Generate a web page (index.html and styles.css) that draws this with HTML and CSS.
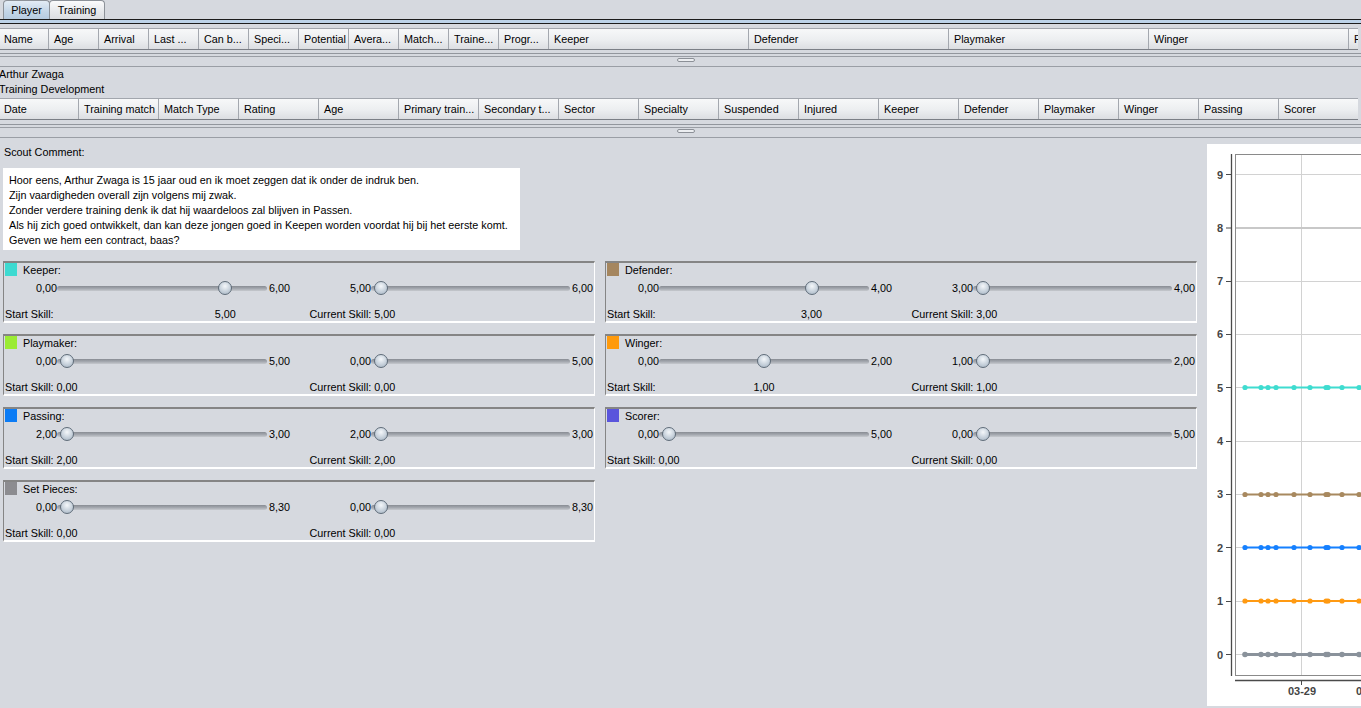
FILE: index.html
```html
<!DOCTYPE html>
<html>
<head>
<meta charset="utf-8">
<title>Player Training</title>
<link rel="stylesheet" href="styles.css">
</head>
<body>
<div class="tabbar">
  <div class="tab sel">Player</div>
  <div class="tab t2tab">Training</div>
</div>
<div class="tabline"></div>

<div class="thead t1">
  <div class="th">Name</div>
  <div class="th">Age</div>
  <div class="th">Arrival</div>
  <div class="th">Last ...</div>
  <div class="th">Can b...</div>
  <div class="th">Speci...</div>
  <div class="th">Potential</div>
  <div class="th">Avera...</div>
  <div class="th">Match...</div>
  <div class="th">Traine...</div>
  <div class="th">Progr...</div>
  <div class="th wide">Keeper</div>
  <div class="th wide">Defender</div>
  <div class="th wide">Playmaker</div>
  <div class="th wide">Winger</div>
  <div class="th wide">Passing</div>
</div>
<div class="hscroll"></div>
<div class="splitter"><span class="grip"></span></div>

<div class="plabel">Arthur Zwaga</div>
<div class="plabel">Training Development</div>

<div class="thead t2">
  <div class="th">Date</div>
  <div class="th">Training match</div>
  <div class="th">Match Type</div>
  <div class="th">Rating</div>
  <div class="th">Age</div>
  <div class="th">Primary train...</div>
  <div class="th">Secondary t...</div>
  <div class="th">Sector</div>
  <div class="th">Specialty</div>
  <div class="th">Suspended</div>
  <div class="th">Injured</div>
  <div class="th">Keeper</div>
  <div class="th">Defender</div>
  <div class="th">Playmaker</div>
  <div class="th">Winger</div>
  <div class="th">Passing</div>
  <div class="th">Scorer</div>
</div>
<div class="hscroll h2"></div>
<div class="splitter"><span class="grip"></span></div>

<div class="lower">
  <div class="leftcol">
    <div class="sc-label">Scout Comment:</div>
    <div class="comment">
      <div>Hoor eens, Arthur Zwaga is 15 jaar oud en ik moet zeggen dat ik onder de indruk ben.</div>
      <div>Zijn vaardigheden overall zijn volgens mij zwak.</div>
      <div>Zonder verdere training denk ik dat hij waardeloos zal blijven in Passen.</div>
      <div>Als hij zich goed ontwikkelt, dan kan deze jongen goed in Keepen worden voordat hij bij het eerste komt.</div>
      <div>Geven we hem een contract, baas?</div>
    </div>

    <div class="skills">
      <!-- Keeper -->
      <div class="skill">
        <div class="sk-head"><span class="sw c-keeper"></span>Keeper:</div>
        <div class="sk-row">
          <div class="half h1"><span class="mn">0,00</span><div class="track"><span class="thumb" style="--f:0.8333"></span></div><span class="mx">6,00</span></div>
          <div class="half h2"><span class="mn">5,00</span><div class="track"><span class="thumb" style="--f:0"></span></div><span class="mx">6,00</span></div>
        </div>
        <div class="sk-foot">
          <div class="half h1 foot"><span class="lbl">Start Skill:</span><span class="under" style="--f:0.8333">5,00</span></div>
          <div class="half h2 foot2">Current Skill: 5,00</div>
        </div>
      </div>
      <!-- Defender -->
      <div class="skill">
        <div class="sk-head"><span class="sw c-defender"></span>Defender:</div>
        <div class="sk-row">
          <div class="half h1"><span class="mn">0,00</span><div class="track"><span class="thumb" style="--f:0.75"></span></div><span class="mx">4,00</span></div>
          <div class="half h2"><span class="mn">3,00</span><div class="track"><span class="thumb" style="--f:0"></span></div><span class="mx">4,00</span></div>
        </div>
        <div class="sk-foot">
          <div class="half h1 foot"><span class="lbl">Start Skill:</span><span class="under" style="--f:0.75">3,00</span></div>
          <div class="half h2 foot2">Current Skill: 3,00</div>
        </div>
      </div>
      <!-- Playmaker -->
      <div class="skill">
        <div class="sk-head"><span class="sw c-playmaker"></span>Playmaker:</div>
        <div class="sk-row">
          <div class="half h1"><span class="mn">0,00</span><div class="track"><span class="thumb" style="--f:0"></span></div><span class="mx">5,00</span></div>
          <div class="half h2"><span class="mn">0,00</span><div class="track"><span class="thumb" style="--f:0"></span></div><span class="mx">5,00</span></div>
        </div>
        <div class="sk-foot">
          <div class="half h1 foot"><span class="lbl">Start Skill: 0,00</span></div>
          <div class="half h2 foot2">Current Skill: 0,00</div>
        </div>
      </div>
      <!-- Winger -->
      <div class="skill">
        <div class="sk-head"><span class="sw c-winger"></span>Winger:</div>
        <div class="sk-row">
          <div class="half h1"><span class="mn">0,00</span><div class="track"><span class="thumb" style="--f:0.5"></span></div><span class="mx">2,00</span></div>
          <div class="half h2"><span class="mn">1,00</span><div class="track"><span class="thumb" style="--f:0"></span></div><span class="mx">2,00</span></div>
        </div>
        <div class="sk-foot">
          <div class="half h1 foot"><span class="lbl">Start Skill:</span><span class="under" style="--f:0.5">1,00</span></div>
          <div class="half h2 foot2">Current Skill: 1,00</div>
        </div>
      </div>
      <!-- Passing -->
      <div class="skill">
        <div class="sk-head"><span class="sw c-passing"></span>Passing:</div>
        <div class="sk-row">
          <div class="half h1"><span class="mn">2,00</span><div class="track"><span class="thumb" style="--f:0"></span></div><span class="mx">3,00</span></div>
          <div class="half h2"><span class="mn">2,00</span><div class="track"><span class="thumb" style="--f:0"></span></div><span class="mx">3,00</span></div>
        </div>
        <div class="sk-foot">
          <div class="half h1 foot"><span class="lbl">Start Skill: 2,00</span></div>
          <div class="half h2 foot2">Current Skill: 2,00</div>
        </div>
      </div>
      <!-- Scorer -->
      <div class="skill">
        <div class="sk-head"><span class="sw c-scorer"></span>Scorer:</div>
        <div class="sk-row">
          <div class="half h1"><span class="mn">0,00</span><div class="track"><span class="thumb" style="--f:0"></span></div><span class="mx">5,00</span></div>
          <div class="half h2"><span class="mn">0,00</span><div class="track"><span class="thumb" style="--f:0"></span></div><span class="mx">5,00</span></div>
        </div>
        <div class="sk-foot">
          <div class="half h1 foot"><span class="lbl">Start Skill: 0,00</span></div>
          <div class="half h2 foot2">Current Skill: 0,00</div>
        </div>
      </div>
      <!-- Set Pieces -->
      <div class="skill">
        <div class="sk-head"><span class="sw c-setpieces"></span>Set Pieces:</div>
        <div class="sk-row">
          <div class="half h1"><span class="mn">0,00</span><div class="track"><span class="thumb" style="--f:0"></span></div><span class="mx">8,30</span></div>
          <div class="half h2"><span class="mn">0,00</span><div class="track"><span class="thumb" style="--f:0"></span></div><span class="mx">8,30</span></div>
        </div>
        <div class="sk-foot">
          <div class="half h1 foot"><span class="lbl">Start Skill: 0,00</span></div>
          <div class="half h2 foot2">Current Skill: 0,00</div>
        </div>
      </div>
    </div>
  </div>

  <div class="chart">
    <svg class="chart-svg" width="200" height="562" viewBox="0 0 200 562">
      <rect x="28.5" y="10.5" width="200" height="521" fill="#fff" stroke="#8a8a8a" stroke-width="1"/>
      <g stroke="#d2d2d2" stroke-width="1">
        <line x1="29" x2="200" y1="510.5" y2="510.5"/>
        <line x1="29" x2="200" y1="457.5" y2="457.5"/>
        <line x1="29" x2="200" y1="403.5" y2="403.5"/>
        <line x1="29" x2="200" y1="350.5" y2="350.5"/>
        <line x1="29" x2="200" y1="297.5" y2="297.5"/>
        <line x1="29" x2="200" y1="243.5" y2="243.5"/>
        <line x1="29" x2="200" y1="190.5" y2="190.5"/>
        <line x1="29" x2="200" y1="137.5" y2="137.5"/>
        <line x1="29" x2="200" y1="30.5" y2="30.5"/>
        <line x1="94.5" x2="94.5" y1="11" y2="531"/>
      </g>
      <line x1="29" x2="200" y1="84" y2="84" stroke="#c8c8c8" stroke-width="2"/>
      <line x1="24.5" x2="24.5" y1="10" y2="532" stroke="#4a4a4a" stroke-width="1.3"/>
      <g stroke="#4a4a4a" stroke-width="1">
        <line x1="19" x2="24.5" y1="510.5" y2="510.5"/>
        <line x1="19" x2="24.5" y1="457.5" y2="457.5"/>
        <line x1="19" x2="24.5" y1="403.5" y2="403.5"/>
        <line x1="19" x2="24.5" y1="350.5" y2="350.5"/>
        <line x1="19" x2="24.5" y1="297.5" y2="297.5"/>
        <line x1="19" x2="24.5" y1="243.5" y2="243.5"/>
        <line x1="19" x2="24.5" y1="190.5" y2="190.5"/>
        <line x1="19" x2="24.5" y1="137.5" y2="137.5"/>
        <line x1="19" x2="24.5" y1="84" y2="84"/>
        <line x1="19" x2="24.5" y1="30.5" y2="30.5"/>
      </g>
      <g class="axlbl" text-anchor="end">
        <text x="16" y="514.5">0</text>
        <text x="16" y="461">1</text>
        <text x="16" y="407.5">2</text>
        <text x="16" y="354">3</text>
        <text x="16" y="301">4</text>
        <text x="16" y="247.5">5</text>
        <text x="16" y="194">6</text>
        <text x="16" y="141">7</text>
        <text x="16" y="88">8</text>
        <text x="16" y="34.5">9</text>
      </g>
      <line x1="28" x2="200" y1="536.5" y2="536.5" stroke="#4a4a4a" stroke-width="1.3"/>
      <line x1="94.5" x2="94.5" y1="536.5" y2="541" stroke="#4a4a4a" stroke-width="1"/>
      <g class="axlbl" text-anchor="middle">
        <text x="95" y="551">03-29</text>
        <text x="163" y="551">04-05</text>
      </g>
      <g stroke-width="2" fill="none">
        <polyline stroke="#3fdcd0" points="38,243.5 200,243.5"/>
        <polyline stroke="#a8895f" points="38,350.5 200,350.5"/>
        <polyline stroke="#1580ff" points="38,403.5 200,403.5"/>
        <polyline stroke="#ff9a12" points="38,457 200,457"/>
        <polyline stroke="#8a929b" stroke-width="3" points="38,510.5 200,510.5"/>
      </g>
      <g fill="#3fdcd0">
        <circle cx="38" cy="243.5" r="2.6"/><circle cx="54" cy="243.5" r="2.6"/><circle cx="61" cy="243.5" r="2.6"/><circle cx="69" cy="243.5" r="2.6"/><circle cx="87" cy="243.5" r="2.6"/><circle cx="103" cy="243.5" r="2.6"/><circle cx="119" cy="243.5" r="2.6"/><circle cx="121" cy="243.5" r="2.6"/><circle cx="135" cy="243.5" r="2.6"/><circle cx="152" cy="243.5" r="2.6"/>
      </g>
      <g fill="#a8895f">
        <circle cx="38" cy="350.5" r="2.6"/><circle cx="54" cy="350.5" r="2.6"/><circle cx="61" cy="350.5" r="2.6"/><circle cx="69" cy="350.5" r="2.6"/><circle cx="87" cy="350.5" r="2.6"/><circle cx="103" cy="350.5" r="2.6"/><circle cx="119" cy="350.5" r="2.6"/><circle cx="121" cy="350.5" r="2.6"/><circle cx="135" cy="350.5" r="2.6"/><circle cx="152" cy="350.5" r="2.6"/>
      </g>
      <g fill="#1580ff">
        <circle cx="38" cy="403.5" r="2.6"/><circle cx="54" cy="403.5" r="2.6"/><circle cx="61" cy="403.5" r="2.6"/><circle cx="69" cy="403.5" r="2.6"/><circle cx="87" cy="403.5" r="2.6"/><circle cx="103" cy="403.5" r="2.6"/><circle cx="119" cy="403.5" r="2.6"/><circle cx="121" cy="403.5" r="2.6"/><circle cx="135" cy="403.5" r="2.6"/><circle cx="152" cy="403.5" r="2.6"/>
      </g>
      <g fill="#ff9a12">
        <circle cx="38" cy="457" r="2.6"/><circle cx="54" cy="457" r="2.6"/><circle cx="61" cy="457" r="2.6"/><circle cx="69" cy="457" r="2.6"/><circle cx="87" cy="457" r="2.6"/><circle cx="103" cy="457" r="2.6"/><circle cx="119" cy="457" r="2.6"/><circle cx="121" cy="457" r="2.6"/><circle cx="135" cy="457" r="2.6"/><circle cx="152" cy="457" r="2.6"/>
      </g>
      <g fill="#8a929b">
        <circle cx="38" cy="510.5" r="2.8"/><circle cx="54" cy="510.5" r="2.8"/><circle cx="61" cy="510.5" r="2.8"/><circle cx="69" cy="510.5" r="2.8"/><circle cx="87" cy="510.5" r="2.8"/><circle cx="103" cy="510.5" r="2.8"/><circle cx="119" cy="510.5" r="2.8"/><circle cx="121" cy="510.5" r="2.8"/><circle cx="135" cy="510.5" r="2.8"/><circle cx="152" cy="510.5" r="2.8"/>
      </g>
    </svg>
  </div>
</div>
</body>
</html>
```

FILE: styles.css
```css
html, body {
  margin: 0;
  padding: 0;
}
body {
  background: #d6d9df;
  font-family: "Liberation Sans", Arial, sans-serif;
  font-size: 10.8px;
  color: #000;
  width: 1361px;
  height: 708px;
  overflow: hidden;
}

/* tabs */
.tabbar {
  display: flex;
  height: 19px;
  padding-left: 3px;
}
.tab {
  box-sizing: border-box;
  height: 19px;
  border: 1px solid #8d9299;
  border-bottom: none;
  border-radius: 4px 4px 0 0;
  line-height: 18px;
  text-align: center;
  background: linear-gradient(#fbfbfc, #e6e8eb 60%, #dcdee2);
}
.tab.sel {
  width: 47px;
  background: linear-gradient(#e3ecf5, #c3d5e7 60%, #b6cbe0);
}
.tab.t2tab {
  width: 56px;
  margin-left: -1px;
}
.tabline {
  height: 3px;
  border-top: 1px solid #1c1c1c;
  border-bottom: 1px solid #1c1c1c;
  background: #bcd2e8;
}

/* table headers */
.thead {
  display: flex;
  height: 20px;
  width: 1359px;
  margin-left: -1px;
  border-top: 1px solid #a2a6ad;
  border-bottom: 1px solid #7b7f86;
  overflow: hidden;
}
.t1 { margin-top: 4px; }
.t2 { margin-top: 1px; }
.th {
  flex: 0 0 auto;
  box-sizing: border-box;
  width: 50px;
  height: 20px;
  border-right: 1px solid #a4a8af;
  padding-left: 5px;
  line-height: 20px;
  white-space: nowrap;
  overflow: hidden;
  background: linear-gradient(#f7f8f9, #eceef0 55%, #dcdee2);
}
.t1 .th.wide { width: 200px; }
.t2 .th { width: 80px; }

.hscroll {
  height: 3px;
  border-bottom: 1px solid #92969d;
}
.hscroll.h2 { height: 4px; }

.splitter {
  margin-top: 2px;
  height: 8px;
  border-top: 1px solid #9a9ea5;
  border-bottom: 1px solid #9a9ea5;
  padding-top: 1px;
}
.grip {
  display: block;
  box-sizing: border-box;
  width: 18px;
  height: 4px;
  margin-left: 677px;
  border: 1px solid #8c9097;
  border-radius: 2px;
  background: #eceef1;
}

.plabel {
  line-height: 15px;
  height: 15px;
  margin-left: -1px;
  white-space: nowrap;
}

/* lower area */
.lower {
  display: flex;
  height: 571px;
}
.leftcol {
  flex: 0 0 1207px;
}
.sc-label {
  padding-top: 7px;
  padding-left: 4px;
  line-height: 14px;
}
.comment {
  box-sizing: border-box;
  margin: 9px 0 0 3px;
  width: 517px;
  height: 82px;
  padding: 5px 0 0 6px;
  background: #fff;
  line-height: 15px;
  white-space: nowrap;
}

.skills {
  margin: 11px 0 0 3px;
  display: grid;
  grid-template-columns: 592px 592px;
  column-gap: 10px;
  row-gap: 11px;
}
.skill {
  box-sizing: border-box;
  height: 62px;
  border-top: 2px solid #858585;
  border-left: 1px solid #858585;
  border-right: 1px solid #ffffff;
  border-bottom: 2px solid #ffffff;
  padding-left: 1px;
}
.sk-head {
  display: flex;
  align-items: flex-start;
  height: 15px;
  line-height: 15px;
}
.sw {
  display: block;
  width: 12px;
  height: 13px;
  margin-right: 6px;
}
.c-keeper { background: #3ddad1; }
.c-defender { background: #a5865f; }
.c-playmaker { background: #9beb34; }
.c-winger { background: #ff9a0c; }
.c-passing { background: #0c7cf5; }
.c-scorer { background: #5a55dc; }
.c-setpieces { background: #8c8c90; }

.sk-row {
  display: flex;
  height: 20px;
}
.half {
  display: flex;
  align-items: center;
  box-sizing: border-box;
}
.half.h1 {
  width: 305px;
  padding-left: 27px;
}
.half.h2 {
  width: 285px;
  padding-left: 37px;
}
.mn {
  width: 25px;
  text-align: right;
  flex: 0 0 25px;
}
.mx {
  margin-left: 2px;
  flex: 0 0 22px;
}
.track {
  position: relative;
  height: 5px;
  border-radius: 3px;
  background: linear-gradient(#888c93, #a3a7ae 50%, #c6c9ce);
}
.h1 .track { flex: 0 0 210px; }
.h2 .track { flex: 0 0 199px; }
.thumb {
  position: absolute;
  top: 50%;
  left: calc(10px + var(--f) * (100% - 20px));
  width: 14px;
  height: 14px;
  box-sizing: border-box;
  border: 1px solid #5f6c79;
  border-radius: 50%;
  background: radial-gradient(circle at 50% 35%, #f4f7fa 0, #cfd8e1 45%, #a2b1c0 100%);
  transform: translate(-50%, -50%);
}

.sk-foot {
  display: flex;
  margin-top: 10px;
  height: 13px;
  line-height: 13px;
}
.sk-foot .half {
  align-items: stretch;
}
.half.foot {
  display: grid;
  padding-left: 0;
  grid-template-columns: 27px 25px 210px 1fr;
}
.foot .lbl {
  grid-row: 1;
  grid-column: 1 / -1;
  white-space: nowrap;
}
.foot .under {
  grid-row: 1;
  grid-column: 3;
  justify-self: start;
  margin-left: calc(10px + var(--f) * (100% - 20px));
  transform: translateX(-50%);
}
.half.h2.foot2 {
  padding-left: 0;
  white-space: nowrap;
}

/* chart */
.chart {
  flex: 1 1 auto;
  margin: 6px 0 3px 0;
  height: 562px;
  background: #fff;
  overflow: hidden;
}
.chart-svg {
  display: block;
}
.axlbl text {
  font-family: "Liberation Sans", Arial, sans-serif;
  font-size: 11px;
  font-weight: bold;
  fill: #454545;
}
```
